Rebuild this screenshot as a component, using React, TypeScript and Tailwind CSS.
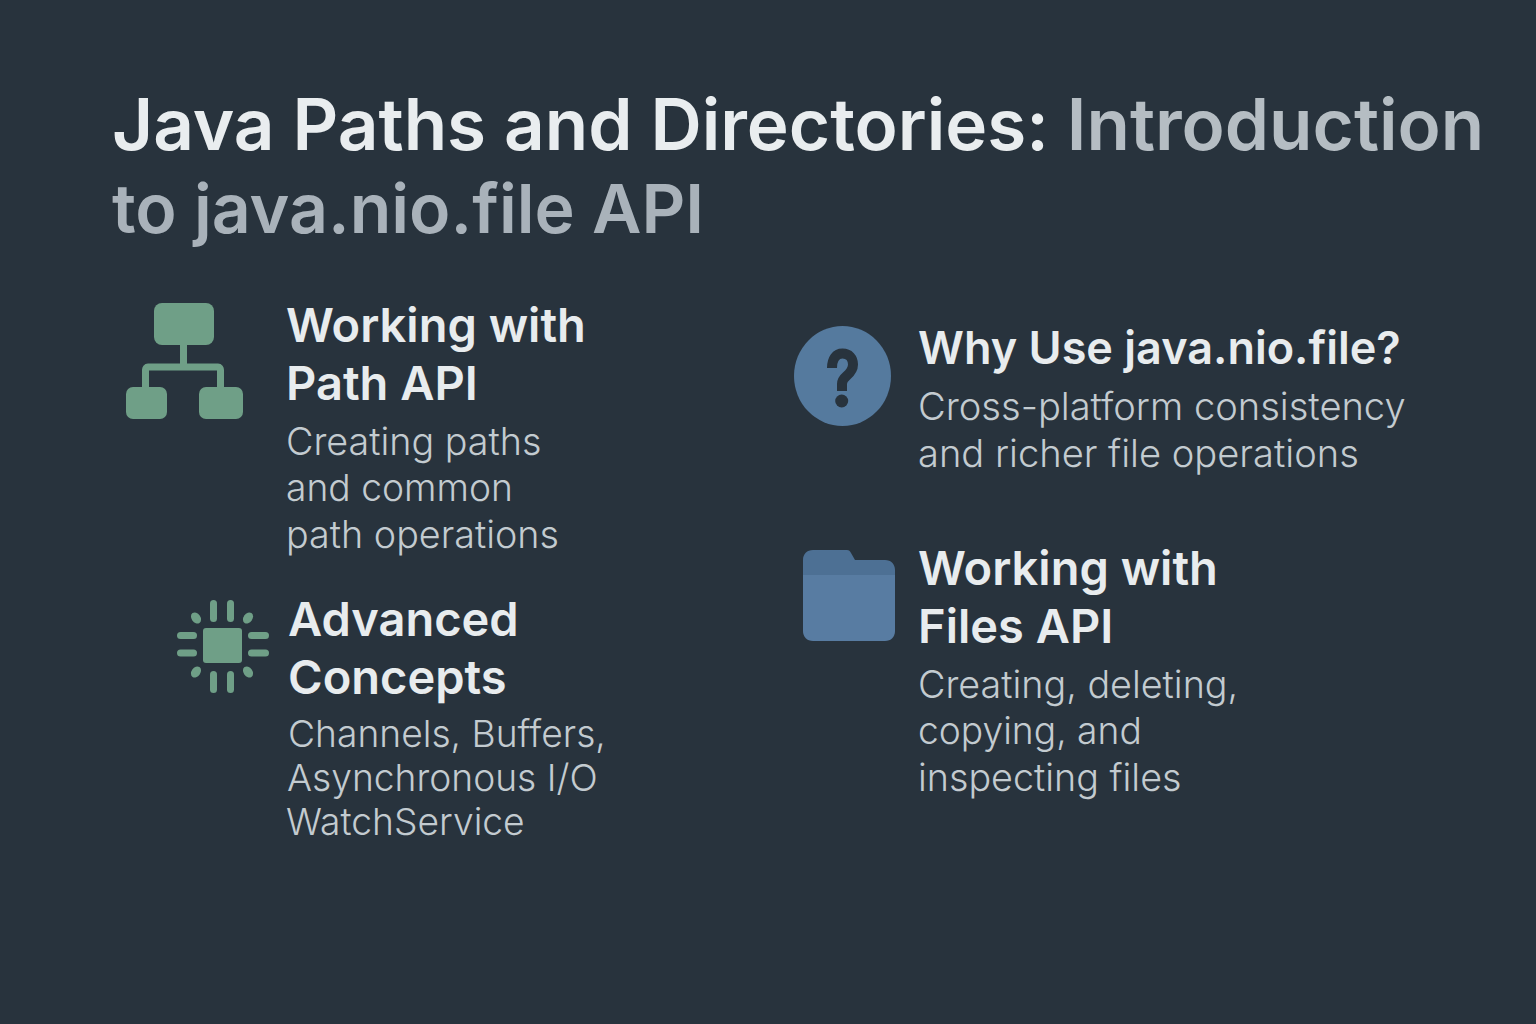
function PathIcon() {
  return (
    <svg width="120" height="118" viewBox="0 0 120 118" fill="none">
      <path d="M58.500 40V64M20.500 90V67C20.500 65.500 21.500 64 23 64H93C94.500 64 95.500 65.500 95.500 67V90" stroke="#6f9f87" strokeWidth="7" />
      <rect x="29" y="0" width="60" height="42" rx="8" fill="#6f9f87" />
      <rect x="1" y="84" width="41" height="32" rx="7" fill="#6f9f87" />
      <rect x="74" y="84" width="44" height="32" rx="7" fill="#6f9f87" />
    </svg>
  )
}

function ChipIcon() {
  return (
    <svg width="94" height="94" viewBox="0 0 94 94" fill="#6f9f87">
      <rect x="27" y="28" width="39" height="35" rx="3" />
      <rect x="34" y="0" width="7" height="22" rx="3.500" />
      <rect x="51" y="0" width="7" height="22" rx="3.500" />
      <rect x="34" y="71" width="7" height="22" rx="3.500" />
      <rect x="51" y="71" width="7" height="22" rx="3.500" />
      <rect x="1" y="32" width="20" height="7" rx="3.500" />
      <rect x="1" y="49.500" width="20" height="7" rx="3.500" />
      <rect x="72" y="32" width="21" height="7" rx="3.500" />
      <rect x="72" y="49.500" width="21" height="7" rx="3.500" />
      <ellipse cx="20" cy="18" rx="4.500" ry="6" transform="rotate(-35 20 18)" />
      <ellipse cx="72" cy="18" rx="4.500" ry="6" transform="rotate(35 72 18)" />
      <ellipse cx="20" cy="72" rx="4.500" ry="6" transform="rotate(35 20 72)" />
      <ellipse cx="72" cy="72" rx="4.500" ry="6" transform="rotate(-35 72 72)" />
    </svg>
  )
}

function QuestionIcon() {
  return (
    <svg width="98" height="100" viewBox="0 0 98 100">
      <ellipse cx="48.500" cy="50" rx="48.500" ry="50" fill="#557a9e" />
      <path d="M38 42C38 33 42 27.500 48.500 27.500C55 27.500 59 32 59 38.500C59 44 56 47 52.500 50C49.500 52.500 48 54.500 48 58V65" fill="none" stroke="#28333d" strokeWidth="10" />
      <circle cx="47.700" cy="75" r="6.500" fill="#28333d" />
    </svg>
  )
}

function FolderIcon() {
  return (
    <svg width="92" height="91" viewBox="0 0 92 91">
      <path d="M0 10C0 4 4 0 10 0H44C46 0 47 1 48 3L52 10H82C88 10 92 14 92 20V26H0Z" fill="#4d7094" />
      <path d="M0 25H92V81C92 87 88 91 82 91H10C4 91 0 87 0 81Z" fill="#587ca2" />
    </svg>
  )
}

function Feature({ title, titleClass, children }: { title: string[]; titleClass?: string; children: React.ReactNode }) {
  return (
    <div>
      <h2 className={`leading-[58px] font-semibold text-[#e8ecee] whitespace-nowrap ${titleClass ?? 'text-[47px]'}`}>
        {title.map((t) => (
          <div key={t}>{t}</div>
        ))}
      </h2>
      <div className="text-[37.700px] font-light text-[#c3cbd0] mt-[6px] whitespace-nowrap">{children}</div>
    </div>
  )
}

export default function App() {
  return (
    <div className="w-[1536px] h-[1024px] overflow-hidden bg-[#28333d] pt-[82px] pl-[112px] font-['Inter',sans-serif]">
      <h1 className="leading-[84px] font-semibold text-[#e9edef] whitespace-nowrap">
        <span className="block text-[71px]">
          Java Paths and Directories: <span className="text-[#b5bdc3]">Introduction</span>
        </span>
        <span className="block text-[68px] text-[#a9b2ba]">to java.nio.file API</span>
      </h1>

      <div className="flex mt-[46px]">
        {/* colonne gauche */}
        <div className="w-[681px] shrink-0">
          <div className="flex">
            <div className="pl-[13px] pt-[7px] w-[174px] shrink-0">
              <PathIcon />
            </div>
            <Feature title={['Working with', 'Path API']}>
              <div className="leading-[46.500px]">Creating paths</div>
              <div className="leading-[46.500px] text-[37.200px]">and common</div>
              <div className="leading-[46.500px]">path operations</div>
            </Feature>
          </div>
          <div className="flex mt-[32px]">
            <div className="pl-[64px] pt-[10px] w-[176px] shrink-0">
              <ChipIcon />
            </div>
            <Feature title={['Advanced', 'Concepts']}>
              <div className="text-[37.200px]">
                <div className="leading-[44px]">Channels, Buffers,</div>
                <div className="leading-[44px] -ml-[1px]">Asynchronous I/O</div>
                <div className="leading-[44px] -ml-[2px]">WatchService</div>
              </div>
            </Feature>
          </div>
        </div>

        {/* colonne droite */}
        <div className="pt-[23px]">
          <div className="flex">
            <div className="w-[125px] shrink-0 pl-[1px] pt-[7px]">
              <QuestionIcon />
            </div>
            <Feature title={['Why Use java.nio.file?']} titleClass="text-[45px]">
              <div className="text-[38.100px]">
                <div className="leading-[46.500px]">Cross-platform consistency</div>
                <div className="leading-[46.500px]">and richer file operations</div>
              </div>
            </Feature>
          </div>
          <div className="flex mt-[63px]">
            <div className="w-[125px] shrink-0 pl-[10px] pt-[11px]">
              <FolderIcon />
            </div>
            <Feature title={['Working with', 'Files API']}>
              <div className="leading-[46.500px]">Creating, deleting,</div>
              <div className="leading-[46.500px] text-[37.200px]">copying, and</div>
              <div className="leading-[46.500px]">inspecting files</div>
            </Feature>
          </div>
        </div>
      </div>
    </div>
  )
}
